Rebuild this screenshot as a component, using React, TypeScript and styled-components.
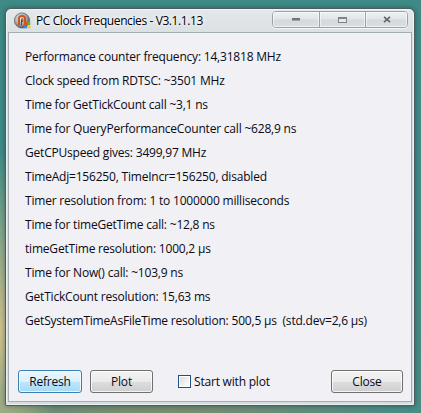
import styled, { createGlobalStyle } from 'styled-components';

const GlobalStyle = createGlobalStyle`
  html, body {
    margin: 0;
    padding: 0;
    background: #3f8a87;
  }
  * {
    box-sizing: border-box;
  }
`;

const Desktop = styled.div`
  width: 421px;
  height: 413px;
  overflow: hidden;
  padding: 8px 6px 7px 5px;
  background:
    radial-gradient(ellipse 60px 180px at 0px 330px, rgba(214, 196, 140, 0.95), rgba(214, 196, 140, 0) 100%),
    radial-gradient(ellipse 260px 30px at 150px 420px, rgba(150, 140, 100, 0.9), rgba(150, 140, 100, 0) 100%),
    linear-gradient(180deg, #3e8a86 0%, #3f8c88 60%, #4a8c86 100%);
  font-family: "Segoe UI", "Open Sans", "Noto Sans", sans-serif;
`;

const Window = styled.div`
  height: 398px;
  display: flex;
  flex-direction: column;
  padding: 0 2px 3px 2px;
  border: 1px solid rgba(30, 50, 55, 0.75);
  border-radius: 6px 6px 2px 2px;
  background: linear-gradient(180deg, #e4e8eb 0%, #d9dee2 30px, #d6dcdf 100%);
  box-shadow: 0 0 5px rgba(0, 0, 0, 0.35), inset 0 0 0 1px rgba(255, 255, 255, 0.55);
`;

const TitleBar = styled.div`
  height: 23px;
  display: flex;
  align-items: center;
  padding-left: 6px;
`;

const TitleText = styled.span`
  margin-left: 5px;
  font-size: 12px;
  letter-spacing: -0.4px;
  color: #000;
  text-shadow: 0 0 6px #fff, 0 0 3px #fff;
  white-space: nowrap;
`;

const CaptionGroup = styled.div`
  margin-left: auto;
  margin-right: 4px;
  align-self: flex-start;
  margin-top: 2px;
  display: flex;
  height: 17px;
  border: 1px solid #97a3a9;
  border-radius: 4px;
  overflow: hidden;
  box-shadow: 0 1px 0 rgba(255, 255, 255, 0.7);
`;

const CaptionButton = styled.div<{ $w: number }>`
  width: ${(p) => p.$w}px;
  display: flex;
  align-items: center;
  justify-content: center;
  background: linear-gradient(180deg, #eef1f3 0%, #e2e6e9 45%, #d3d9dd 55%, #d9dfe2 100%);
  box-shadow: inset 0 0 0 1px rgba(255, 255, 255, 0.55);
  & + & {
    border-left: 1px solid #97a3a9;
  }
`;

const Client = styled.div`
  flex: 1;
  display: flex;
  flex-direction: column;
  border: 1px solid #a3adb3;
  background: #f0f0f5;
  padding: 12px 8px 8px 16px;
`;

const Lines = styled.div`
  display: flex;
  flex-direction: column;
`;

const Line = styled.div`
  height: 24px;
  line-height: 24px;
  font-size: 12px;
  letter-spacing: -0.2px;
  color: #0a0a14;
  white-space: pre;
`;

const Footer = styled.div`
  margin-top: auto;
  margin-left: -7px;
  display: flex;
  align-items: center;
  height: 23px;
`;

const Button = styled.button<{ $default?: boolean; $w: number }>`
  width: ${(p) => p.$w}px;
  height: 23px;
  margin: 0;
  padding: 0;
  font-family: inherit;
  font-size: 12px;
  letter-spacing: -0.2px;
  color: #0a0a14;
  border-radius: 3px;
  border: 1px solid ${(p) => (p.$default ? '#3c7fb1' : '#707070')};
  background: ${(p) =>
    p.$default
      ? 'linear-gradient(180deg, #eaf6fd 0%, #d9f0fc 50%, #bee6fd 51%, #a7d9f5 100%)'
      : 'linear-gradient(180deg, #f2f2f2 0%, #ebebeb 50%, #dddddd 51%, #cfcfcf 100%)'};
  box-shadow: inset 0 0 0 1px rgba(255, 255, 255, 0.75);
  & + & {
    margin-left: 8px;
  }
`;

const CheckLabel = styled.label`
  margin-left: 25px;
  display: flex;
  align-items: center;
  font-size: 12px;
  letter-spacing: -0.2px;
  color: #0a0a14;
`;

const CheckBox = styled.span`
  width: 13px;
  height: 13px;
  margin-right: 3px;
  border: 1px solid #1c5180;
  background: linear-gradient(135deg, #dcdcdc 0%, #ffffff 100%);
  box-shadow: inset 0 0 0 1px #fff;
`;

const CloseButton = styled(Button)`
  margin-left: auto;
`;

const AppIcon = () => (
  <svg width="17" height="17" viewBox="0 0 17 17">
    <defs>
      <radialGradient id="ball" cx="40%" cy="35%" r="65%">
        <stop offset="0%" stopColor="#f4f4f4" />
        <stop offset="60%" stopColor="#a8a8a8" />
        <stop offset="100%" stopColor="#555" />
      </radialGradient>
    </defs>
    <circle cx="8" cy="8.5" r="7.6" fill="url(#ball)" stroke="#4a4a4a" strokeWidth="0.6" />
    <path d="M5 13 V6.5 Q5 4 8 4 Q11 4 11 6.5 V11" fill="none" stroke="#c8561f" strokeWidth="2" />
    <path d="M7.5 13 V7.5 Q7.5 6.6 8.2 6.6 Q8.8 6.6 8.8 7.5 V10" fill="none" stroke="#8a3412" strokeWidth="1" />
    <rect x="10" y="10" width="3" height="3" fill="#e8482c" />
    <rect x="13.3" y="10" width="3" height="3" fill="#5fb733" />
    <rect x="10" y="13.3" width="3" height="3" fill="#2f8ddb" />
    <rect x="13.3" y="13.3" width="3" height="3" fill="#f7c223" />
  </svg>
);

const lines = [
  'Performance counter frequency: 14,31818 MHz',
  'Clock speed from RDTSC: ~3501 MHz',
  'Time for GetTickCount call ~3,1 ns',
  'Time for QueryPerformanceCounter call ~628,9 ns',
  'GetCPUspeed gives: 3499,97 MHz',
  'TimeAdj=156250, TimeIncr=156250, disabled',
  'Timer resolution from: 1 to 1000000 milliseconds',
  'Time for timeGetTime call: ~12,8 ns',
  'timeGetTime resolution: 1000,2 µs',
  'Time for Now() call: ~103,9 ns',
  'GetTickCount resolution: 15,63 ms',
  'GetSystemTimeAsFileTime resolution: 500,5 µs  (std.dev=2,6 µs)',
];

export default function App() {
  return (
    <>
      <GlobalStyle />
      <Desktop>
        <Window>
          <TitleBar>
            <AppIcon />
            <TitleText>PC Clock Frequencies - V3.1.1.13</TitleText>
            <CaptionGroup>
              <CaptionButton $w={46}>
                <svg width="8" height="3" viewBox="0 0 8 3">
                  <rect x="0" y="0" width="8" height="2.5" fill="#6e767b" />
                </svg>
              </CaptionButton>
              <CaptionButton $w={46}>
                <svg width="9" height="6" viewBox="0 0 9 6">
                  <rect x="0.5" y="0.5" width="8" height="5" fill="#e6e9eb" stroke="#7d858a" />
                  <rect x="0.5" y="0.5" width="8" height="1.5" fill="#7d858a" />
                </svg>
              </CaptionButton>
              <CaptionButton $w={42}>
                <svg width="8" height="7" viewBox="0 0 8 7">
                  <path d="M1 0.8 L7 6.2 M7 0.8 L1 6.2" stroke="#5d666b" strokeWidth="1.6" />
                </svg>
              </CaptionButton>
            </CaptionGroup>
          </TitleBar>
          <Client>
            <Lines>
              {lines.map((l) => (
                <Line key={l}>{l}</Line>
              ))}
            </Lines>
            <Footer>
              <Button $default $w={64}>Refresh</Button>
              <Button $w={63}>Plot</Button>
              <CheckLabel>
                <CheckBox />
                Start with plot
              </CheckLabel>
              <CloseButton $w={72}>Close</CloseButton>
            </Footer>
          </Client>
        </Window>
      </Desktop>
    </>
  );
}
